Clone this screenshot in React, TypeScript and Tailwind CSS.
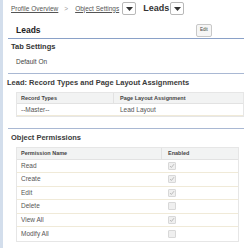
import React from 'react';

const font = { fontFamily: 'Arial, "Liberation Sans", sans-serif' };

const Caret = () => (
  <span className="inline-flex items-center justify-center w-[14px] h-[13px] border border-[#b8b8b8] rounded-[2px] bg-white">
    <svg width="7" height="4" viewBox="0 0 7 4">
      <path d="M0 0h7L3.5 4z" fill="#333" />
    </svg>
  </span>
);

const Check = ({ on }: { on: boolean }) => (
  <span className="inline-flex items-center justify-center w-[8px] h-[8px] border border-[#d8d8d8] rounded-[1px] bg-[#efefef]">
    {on && (
      <svg width="6" height="6" viewBox="0 0 6 6">
        <path d="M1 3l1.4 1.5L5 1.2" stroke="#bcbcbc" strokeWidth="1" fill="none" />
      </svg>
    )}
  </span>
);

const perms: [string, boolean][] = [
  ['Read', true],
  ['Create', true],
  ['Edit', true],
  ['Delete', false],
  ['View All', true],
  ['Modify All', false],
];

export default function App() {
  return (
    <div className="w-[244px] h-[248px] bg-white flex text-[#333] overflow-hidden" style={font}>
      <div className="w-[3px] bg-[#d3deec] shrink-0" />
      <div className="flex-1 flex flex-col">
        <div className="flex items-center h-[15px] mt-[1px] pl-[8px] text-[6.5px] text-[#555]">
          <span className="underline">Profile Overview</span>
          <span className="ml-[6px] text-[#999]">&gt;</span>
          <span className="ml-[7px] underline">Object Settings</span>
          <span className="ml-[3px]"><Caret /></span>
          <span className="ml-[7px] text-[9px] font-bold text-[#333]">Leads</span>
          <span className="ml-[1px]"><Caret /></span>
        </div>
        <div className="flex items-center justify-between h-[16px] mt-[6px] pl-[13px] pr-[32px]">
          <span className="text-[8.5px] font-bold text-[#222]">Leads</span>
          <span className="flex items-center justify-center w-[16px] h-[13px] border border-[#c8c8c8] rounded-[2px] bg-[#f6f6f6] text-[4.5px] text-[#444]">Edit</span>
        </div>
        <div className="ml-[5px] h-[1px] bg-[#8aa1c8]" />
        <div className="pl-[8px] mt-[2px] text-[7.5px] font-bold text-[#333]">Tab Settings</div>
        <div className="pl-[13px] mt-[5px] text-[6.5px] text-[#444]">Default On</div>
        <div className="ml-[5px] mt-[6px] h-[1px] bg-[#a9b8d3]" />
        <div className="pl-[4px] mt-[3px] text-[7.5px] font-bold text-[#3a3a3a]">Lead: Record Types and Page Layout Assignments</div>
        <div className="ml-[13px] mt-[4px] border border-[#e6e6e6] text-[6.5px]">
          <div className="flex h-[11px] items-center bg-[#f2f3f3] font-bold text-[5.5px] text-[#444] border-b border-[#e2e2e2]">
            <span className="w-[97px] pl-[4px] border-r border-[#e2e2e2] h-full flex items-center">Record Types</span>
            <span className="pl-[6px]">Page Layout Assignment</span>
          </div>
          <div className="flex h-[12px] items-center text-[#555] border-b border-[#f0ead8]">
            <span className="w-[97px] pl-[4px]">--Master--</span>
            <span className="pl-[6px]">Lead Layout</span>
          </div>
        </div>
        <div className="ml-[5px] mt-[11px] h-[1px] bg-[#a9b8d3]" />
        <div className="pl-[8px] mt-[3px] text-[7.5px] font-bold text-[#3a3a3a]">Object Permissions</div>
        <div className="ml-[13px] mt-[3px] w-[223px] border border-[#e6e6e6] text-[6.5px]">
          <div className="flex h-[12px] items-center bg-[#f2f3f3] font-bold text-[5.5px] text-[#444] border-b border-[#e2e2e2]">
            <span className="w-[145px] pl-[4px] border-r border-[#e2e2e2] h-full flex items-center">Permission Name</span>
            <span className="pl-[6px]">Enabled</span>
          </div>
          {perms.map(([name, on]) => (
            <div key={name} className="flex h-[13.5px] items-center text-[#555] border-b border-[#f0ead8] last:border-b-0">
              <span className="w-[145px] pl-[4px]">{name}</span>
              <span className="pl-[6px] flex items-center"><Check on={on} /></span>
            </div>
          ))}
        </div>
      </div>
    </div>
  );
}
